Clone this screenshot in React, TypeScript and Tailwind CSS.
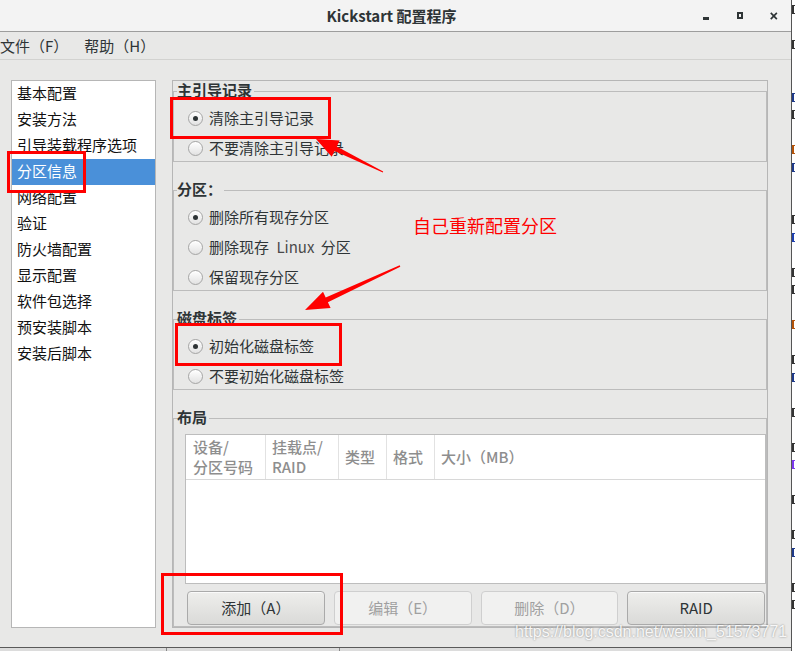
import React from "react";

const UI_FONT = '"Noto Sans CJK SC", "Noto Sans", sans-serif';

const sections = [
  "基本配置",
  "安装方法",
  "引导装载程序选项",
  "分区信息",
  "网络配置",
  "验证",
  "防火墙配置",
  "显示配置",
  "软件包选择",
  "预安装脚本",
  "安装后脚本",
];

function Radio({ checked, label }: { checked?: boolean; label: React.ReactNode }) {
  return (
    <div className="flex h-[26px] items-center pl-[14px]">
      <span className="flex h-[15px] w-[15px] shrink-0 items-center justify-center rounded-full border border-[#a4a4a4] bg-gradient-to-b from-white to-[#e2e2e2] shadow-[inset_0_1px_0_#fff]">
        {checked && <span className="h-[5px] w-[5px] rounded-full bg-[#2e3436]" />}
      </span>
      <span className="ml-[6px] text-[15px] leading-[20px] text-[#2e3436]">{label}</span>
    </div>
  );
}

function Frame({
  title,
  className,
  children,
}: {
  title: string;
  className?: string;
  children: React.ReactNode;
}) {
  return (
    <fieldset className={`border border-[#bcbcbc] ${className ?? ""}`}>
      <legend className="ml-[3px] pb-[2px] pr-[2px] text-[15px] font-bold leading-[18px] text-[#2e3436]">
        {title}
      </legend>
      {children}
    </fieldset>
  );
}

function Button({ label, disabled }: { label: string; disabled?: boolean }) {
  return disabled ? (
    <div className="flex h-[34px] flex-1 items-center justify-center rounded-[4px] border border-[#cfcfcf] bg-[#f1f1f0] text-[15px] text-[#a0a0a0]">
      {label}
    </div>
  ) : (
    <div className="flex h-[34px] flex-1 items-center justify-center rounded-[4px] border border-[#aaaaaa] bg-gradient-to-b from-[#eeeeec] to-[#dadad8] text-[15px] text-[#2e3436] shadow-[inset_0_1px_0_#fafafa]">
      {label}
    </div>
  );
}

const stripMarks = [
  "#333", "", "#333", "", "", "#1e3a8a", "#333", "", "#b45309", "#1e3a8a", "", "", "#333",
  "#1e40af", "", "#333", "#333", "", "#b45309", "", "#333", "#1e3a8a", "", "#333", "",
  "#333", "#7c3aed", "", "#333", "", "#333", "#1e3a8a", "", "#333", "#333", "",
];

export default function App() {
  return (
    <div
      className="relative flex h-[651px] w-[795px] overflow-hidden bg-[#e8e8e7]"
      style={{ fontFamily: UI_FONT }}
    >
      {/* application window */}
      <div className="flex h-full w-[792px] flex-col border-r border-[#555]">
        {/* title bar */}
        <div className="flex h-[32px] shrink-0 items-center border-b border-[#9d9d9d] bg-[#f3f3f3]">
          <div className="w-[88px]" />
          <div className="flex-1 pr-[8px] text-center text-[15px] font-bold leading-[20px] text-[#2e3436]">
            Kickstart 配置程序
          </div>
          <div className="flex w-[88px] items-center justify-end pr-[13px]">
            <span className="mt-[5px] h-[3px] w-[8px] bg-[#2e3436]" />
            <span className="ml-[28px] h-[7px] w-[7px] border-2 border-[#2e3436]" />
            <svg className="ml-[27px]" width="10" height="10" viewBox="0 0 10 10">
              <path d="M1 1 L9 9 M9 1 L1 9" stroke="#2e3436" strokeWidth="2.2" />
            </svg>
          </div>
        </div>

        {/* menu bar */}
        <div className="flex h-[28px] shrink-0 items-center border-b border-[#d2d2d0] text-[15px] leading-[20px] text-[#2e3436]">
          <span>文件（F）</span>
          <span className="ml-[16px]">帮助（H）</span>
        </div>

        {/* body */}
        <div className="flex flex-1 items-start pl-[11px] pt-[20px]">
          {/* section list */}
          <div className="h-[548px] w-[145px] border border-[#b6b6b6] bg-white">
            {sections.map((s) => (
              <div
                key={s}
                className={`flex h-[26px] items-center pb-[2px] pl-[5px] text-[15px] leading-[20px] ${
                  s === "分区信息" ? "bg-[#4a90d9] text-white" : "text-[#111]"
                }`}
              >
                {s}
              </div>
            ))}
          </div>

          {/* partition settings */}
          <div className="ml-[16px] flex h-[548px] w-[596px] flex-col border border-[#b6b6b6]">
            <Frame title="主引导记录">
              <div className="flex flex-col gap-[4px] pt-[4px]">
                <Radio checked label="清除主引导记录" />
                <Radio label="不要清除主引导记录" />
              </div>
            </Frame>

            <Frame title="分区：" className="mt-[18px]">
              <div className="flex flex-col gap-[4px] pt-[4px]">
                <Radio checked label="删除所有现存分区" />
                <Radio
                  label={
                    <>
                      删除现存 <span className="ml-[4px] mr-[3px] text-[#4a4a4a]">Linux</span> 分区
                    </>
                  }
                />
                <Radio label="保留现存分区" />
              </div>
            </Frame>

            <Frame title="磁盘标签" className="mt-[18px]">
              <div className="flex flex-col gap-[4px] pt-[4px]">
                <Radio checked label="初始化磁盘标签" />
                <Radio label="不要初始化磁盘标签" />
              </div>
            </Frame>

            <Frame title="布局" className="mt-[18px]">
              <div className="pb-[1px] pl-[11px] pt-[6px]">
                <div className="h-[150px] border border-[#bdbdbd] bg-white">
                  <div className="flex h-[45px] border-b border-[#d8d8d8] text-[15px] font-medium leading-[20px] text-[#8e8e8e]">
                    <div className="flex w-[80px] flex-col justify-center border-r border-[#e2e2e2] pl-[7px]">
                      <span>设备/</span>
                      <span>分区号码</span>
                    </div>
                    <div className="flex w-[73px] flex-col justify-center border-r border-[#e2e2e2] pl-[6px]">
                      <span>挂载点/</span>
                      <span>RAID</span>
                    </div>
                    <div className="flex w-[48px] items-center border-r border-[#e2e2e2] pl-[6px]">类型</div>
                    <div className="flex w-[48px] items-center border-r border-[#e2e2e2] pl-[6px]">格式</div>
                    <div className="flex flex-1 items-center pl-[6px]">大小（MB）</div>
                  </div>
                </div>
                <div className="ml-[2px] mr-[1px] mt-[7px] flex gap-[9px]">
                  <Button label="添加（A）" />
                  <Button label="编辑（E）" disabled />
                  <Button label="删除（D）" disabled />
                  <Button label="RAID" />
                </div>
              </div>
            </Frame>
          </div>
        </div>

        {/* bottom edge */}
        <div className="flex h-[4px] shrink-0 border-t border-[#5a5a5a] bg-[#dcdcdc]">
          <div className="w-[167px] border-r border-[#888]" />
          <div className="w-[173px] border-r border-[#888]" />
        </div>
      </div>

      {/* neighbouring editor window peeking out */}
      <div className="flex w-[3px] flex-col overflow-hidden bg-white pt-[1px]">
        {stripMarks.map((c, i) => (
          <div key={i} className="flex h-[17.5px] items-center">
            {c && <span className="h-[9px] w-[3px] border-l-2 border-t border-b" style={{ borderColor: c }} />}
          </div>
        ))}
      </div>

      {/* annotations */}
      <div className="pointer-events-none absolute left-[7px] top-[151px] h-[42px] w-[79px] border-[3px] border-[#ff0000]" />
      <div className="pointer-events-none absolute left-[170px] top-[97px] h-[42px] w-[161px] border-[3px] border-[#ff0000]" />
      <div className="pointer-events-none absolute left-[175px] top-[323px] h-[43px] w-[167px] border-[3px] border-[#ff0000]" />
      <div className="pointer-events-none absolute left-[161px] top-[573px] h-[62px] w-[182px] border-[3px] border-[#ff0000]" />

      <svg className="pointer-events-none absolute left-0 top-0" width="795" height="651" viewBox="0 0 795 651">
        <polygon
          fill="#ff0000"
          points="316,139 339.7,140.6 336.8,146.5 383.2,171.4 382.8,172.6 334.6,150.9 331.7,156.8"
        />
        <polygon
          fill="#ff0000"
          points="305,310 323,291.7 325.7,297.6 399.7,265.3 400.3,266.7 327.9,302.2 330.6,308.1"
        />
      </svg>

      <div className="pointer-events-none absolute left-[413px] top-[215px] text-[18px] leading-[20px] text-[#ff0000]">
        自己重新配置分区
      </div>

      <div
        className="pointer-events-none absolute left-[515px] top-[623px] text-[16px] leading-[18px] text-white/90 [text-shadow:0_0_2px_rgba(0,0,0,0.45)]"
        style={{ fontFamily: '"Liberation Sans", Arial, sans-serif' }}
      >
        https://blog.csdn.net/weixin_51573771
      </div>
    </div>
  );
}
